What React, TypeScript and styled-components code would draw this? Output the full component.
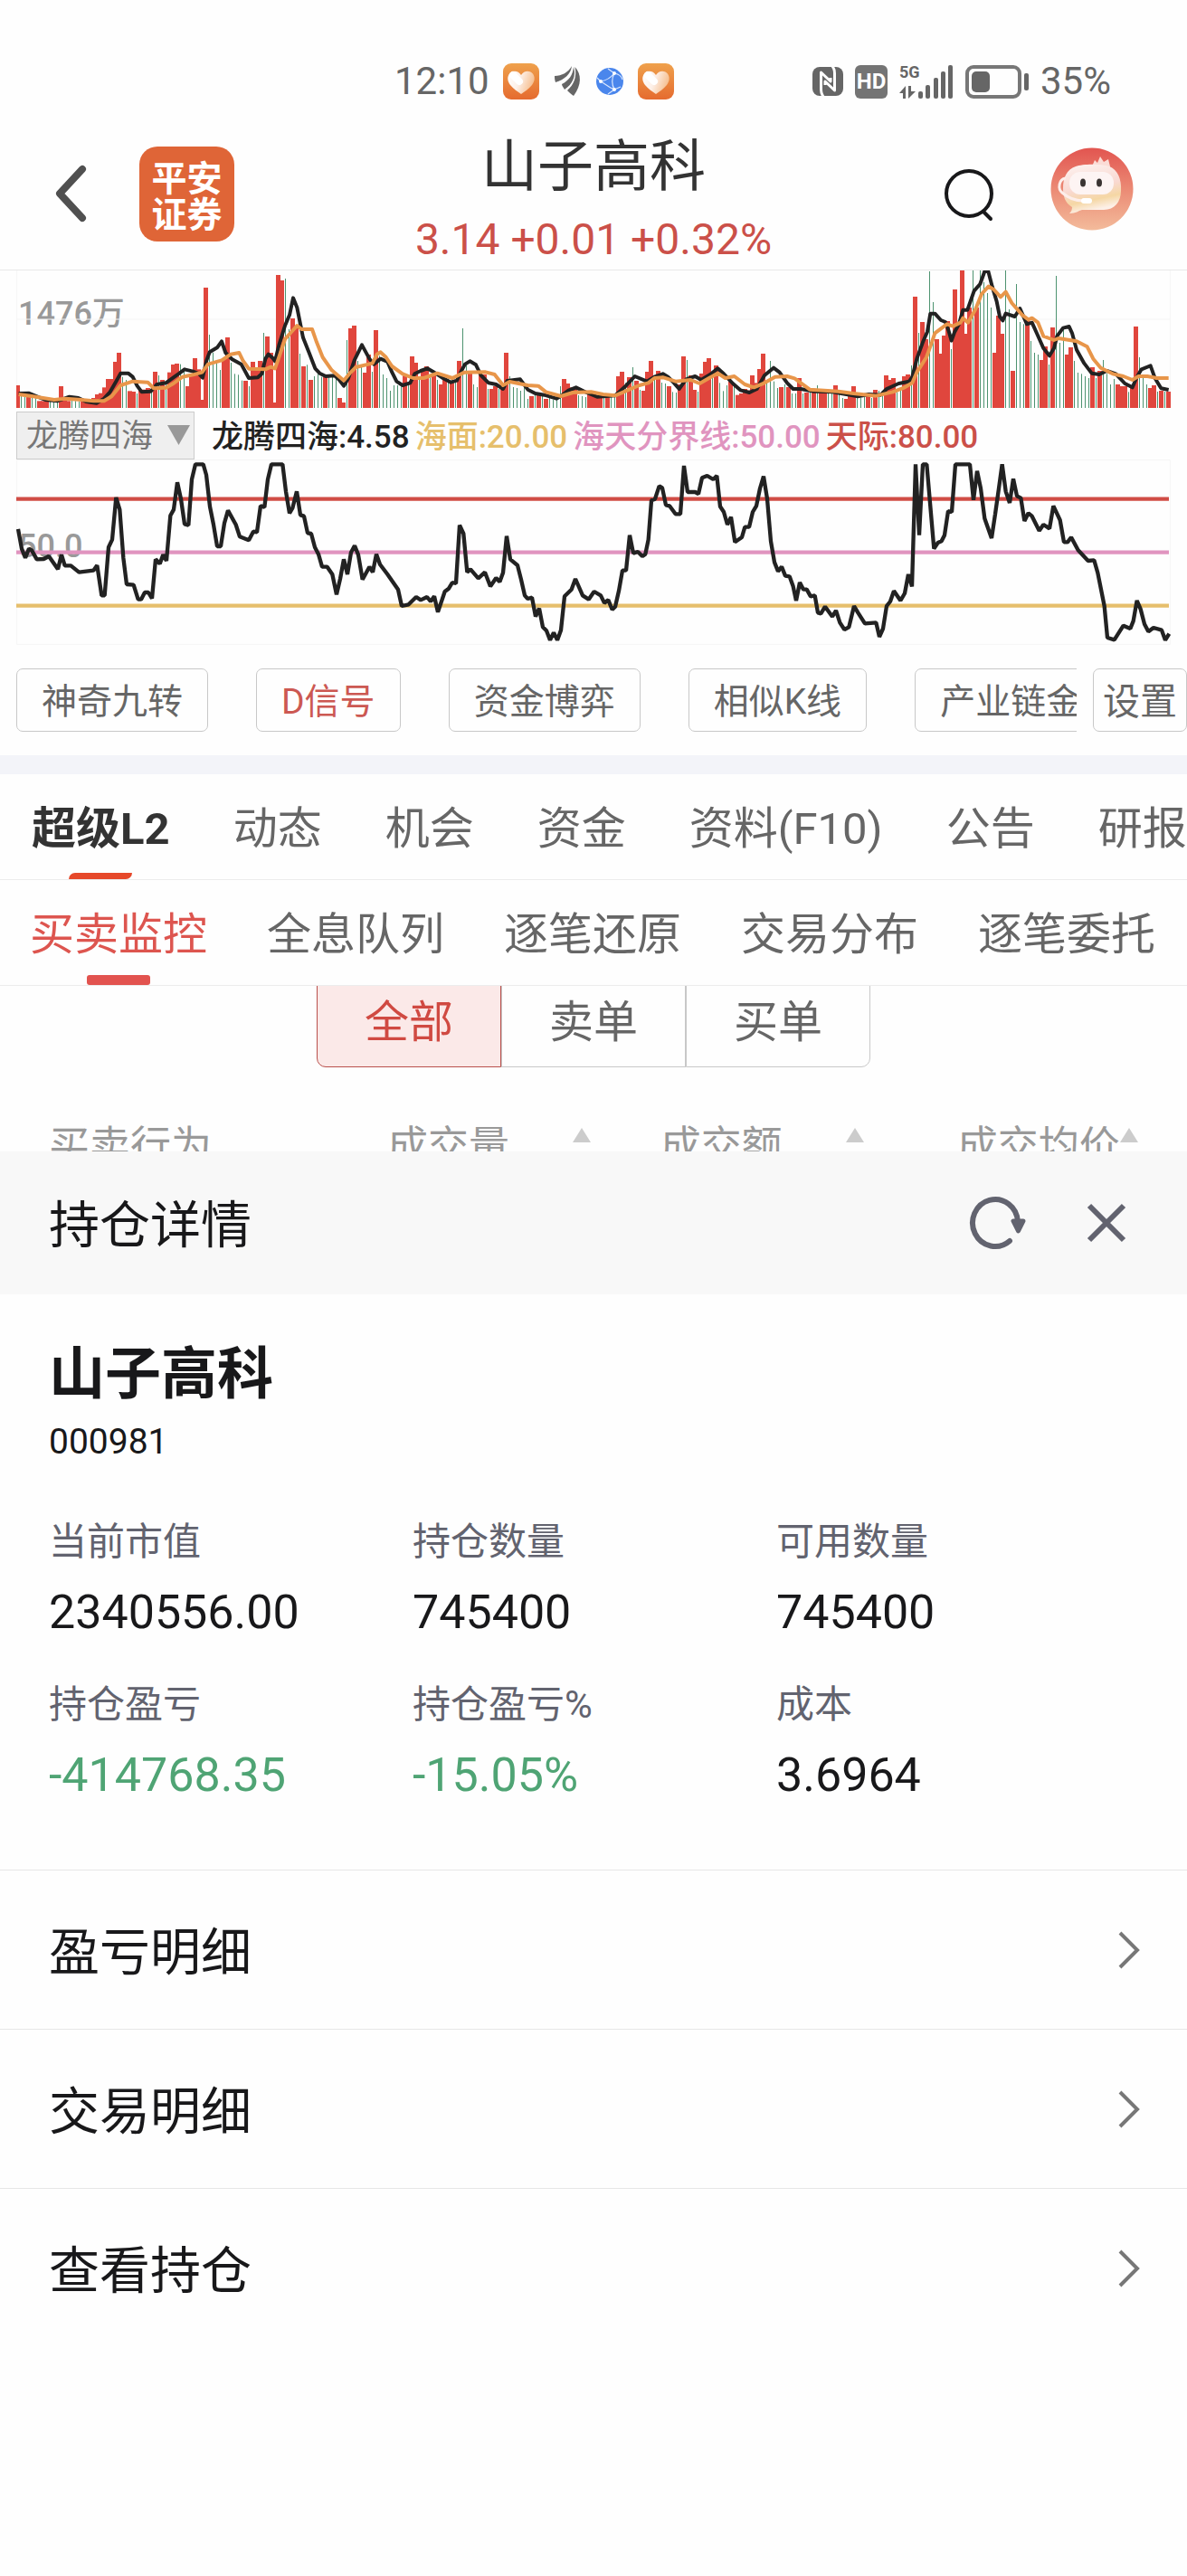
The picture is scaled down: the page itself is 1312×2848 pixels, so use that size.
import React, { useState } from "react";
import styled, { createGlobalStyle } from "styled-components";

const GlobalStyle = createGlobalStyle`
  *, *::before, *::after { box-sizing: border-box; }
  body {
    margin: 0;
    background: #fefefe;
    color: #18181a;
    font-family: Roboto, "Noto Sans CJK SC", sans-serif;
  }
  button, select { font-family: inherit; margin: 0; cursor: pointer; }
  h1, h2, p, dl, dd, dt { margin: 0; font-weight: 400; }
  svg { display: block; flex: none; }
`;

/* ---------- Chart data ---------- */

const FIRST_BAR = 5;
const BASELINE = 483;

// One entry per trading day: r = rising, g = falling, followed by the bar's top.
const VOLUME = `
r408 g435 g440 r440 g440 g450 r460 r460 r460 g452 g455 g460 r411 r450 r460 g455 g460 g462 r462 r460
r458 r450 r438 r434 r415 r387 r387 r330 r300 g380 g390 r427 r429 g435 r425 r422 r417 g415 r363 g375
r390 g400 r365 r339 r336 g338 g360 r411 r375 r318 r355 r456 r84 g240 g300 g330 g357 r320 r249 g333
g370 g373 g392 r393 g411 r330 r357 r327 g234 r246 r300 r465 r42 r60 g54 g222 r186 r210 g303 r345
g340 r390 g378 g370 g380 r381 g378 g378 g378 r450 r465 g258 r219 r210 g327 g340 r366 r306 g363 r225
g310 g372 g384 g426 g408 g408 g412 r376 g400 r312 r333 g380 r360 r345 g375 r375 g390 r405 r390 g385
r400 g390 r327 g219 g340 r366 g405 g414 r372 r372 g420 r420 r411 g420 r414 r300 g378 g414 g417 g426
g414 g453 r444 g435 r432 g444 r453 g445 g456 g456 g411 r387 r402 r415 r420 g441 g444 g447 r432 r432
r445 r447 g447 r447 g447 g440 r378 r363 g400 r381 g348 r393 g423 r426 r363 r327 g385 r360 g399 g402
r411 g430 g432 r405 r312 g324 r375 r423 g429 r369 r330 r318 g370 r342 g400 g427 g408 r396 g400 r440
r435 r420 r425 r375 r400 r354 r303 g395 g327 g395 g417 r414 g405 r414 g435 g435 r384 g435 r432 g432
r430 g408 r430 r430 g435 g435 r408 g438 g450 r453 r440 r411 g447 g450 g447 r440 g450 r423 g426 g440
r375 r390 r384 g430 g425 r378 r372 g342 r114 g234 r198 r255 g30 g132 r255 r303 r243 r195 g288 r90
r210 r27 r237 r150 g27 r150 g27 g66 g102 g150 r300 r177 r237 g27 g156 r360 g72 g198 g205 r195 g261
g300 g306 r324 r279 g339 r216 g45 g267 g220 r306 r282 g327 g366 g370 g378 g384 r348 g384 r360 g324
g370 g405 g387 r405 r411 r411 g430 r414 r213 g315 g375 g405 r417 r408 g429 r426 g429 r429`
  .trim()
  .split(/\s+/)
  .map((entry, i) => ({ up: entry[0] === "r", top: Number(entry.slice(1)), x: (i + FIRST_BAR) * 12 - 2 }));

const shift = (points: string, dx: number) =>
  points
    .trim()
    .split(/\s+/)
    .map((p) => {
      const [x, y] = p.split(",").map(Number);
      return `${x + dx},${y}`;
    })
    .join(" ");

const series = (early: string, middle: string, late: string) =>
  [shift(early, 0), shift(middle, 1320), shift(late, 2610)].join(" ");

const SHORT_AVERAGE = series(
  `62,435 95,434 150,456 190,460 230,446 260,450 285,462 320,467 345,452 365,430 385,395 400,368 425,368
  440,380 455,410 470,430 500,428 520,405 550,400 575,382 595,368 612,355 640,362 660,370 672,383 685,325
  695,298 720,283 735,262 748,300 770,322 800,338 825,384 855,382 868,370 880,320 890,305 905,318 912,328
  925,275 945,210 960,175 972,118 985,150 1005,250 1025,300 1045,352 1060,368 1080,378 1110,376 1125,390
  1140,410 1155,385 1175,325 1200,274 1225,320 1240,338 1262,320 1285,330 1300,365 1315,395`,
  `15,408 40,400 55,370 75,360 97,352 115,362 150,385 175,398 195,392 210,360 222,338 238,328 258,340
  275,375 300,400 325,405 348,420 362,393 405,388 430,422 455,435 485,440 525,452 545,440 565,425 590,415
  625,432 660,446 720,442 755,410 785,378 825,395 850,380 878,370 895,380 915,400 932,420 955,388 985,378
  1005,390 1035,372 1060,352 1080,370 1110,402 1135,424 1165,432 1190,420 1215,375 1245,350 1265,365`,
  `0,400 20,420 45,420 90,428 150,430 235,445 270,438 310,440 330,420 370,402 405,395 415,380 430,320
  450,265 465,230 475,170 490,170 510,192 525,198 535,225 545,260 555,232 570,205 583,158 598,158 620,95
  640,72 655,30 667,30 680,80 695,130 705,180 715,193 725,170 755,180 772,153 795,205 812,200 830,240
  850,285 870,310 885,285 895,245 915,218 935,213 945,235 960,290 985,335 1010,368 1035,372 1060,360
  1090,370 1120,402 1145,415 1160,380 1175,355 1205,343 1220,385 1240,418 1265,423`
);

const LONG_AVERAGE = series(
  `62,438 110,445 180,456 215,452 260,455 310,460 345,460 370,445 400,408 440,395 490,398 510,418 550,416
  575,402 605,380 640,373 670,365 690,338 735,325 765,305 793,300 805,325 825,353 880,355 898,347 912,352
  925,315 945,255 985,210 1000,222 1035,222 1050,265 1070,315 1100,358 1140,392 1160,368 1180,348 1235,335
  1250,305 1262,298 1280,315 1300,345`,
  `15,370 50,384 85,384 130,368 180,384 220,365 290,364 320,372 348,408 370,396 430,408 465,410 490,430
  540,444 580,432 640,430 680,438 720,442 760,425 800,408 830,400 850,384 880,382 920,395 970,390 1000,402
  1030,385 1060,368 1085,384 1115,378 1150,405 1180,415 1215,400 1250,380`,
  `0,378 25,385 75,422 170,428 220,435 295,443 350,430 390,415 415,400 430,365 462,315 480,265 490,235
  530,205 550,212 575,200 583,185 600,200 625,155 645,105 668,80 685,90 708,115 725,98 745,135 780,175
  800,190 812,185 832,200 850,245 885,258 900,252 960,262 995,280 1015,320 1040,350 1080,370 1115,378
  1145,390 1165,378 1195,378 1225,384 1265,384`
);

const OSCILLATOR = series(
  `60,885 72,950 84,980 96,950 105,955 122,985 145,984 162,975 192,1018 204,970 215,1006 235,1006 262,1028
  310,1022 322,1005 337,1105 347,1105 360,945 372,920 385,780 397,820 409,980 420,1068 443,1070 458,1118
  468,1118 480,1095 492,1095 504,1115 516,985 530,1000 541,970 552,990 565,840 576,820 588,730 600,785
  612,868 625,872 636,720 648,670 674,670 684,705 696,810 708,870 720,942 732,942 744,865 756,823 782,870
  795,910 825,922 840,893 852,895 864,808 877,812 888,720 900,670 937,670 948,760 960,832 970,815 984,760
  996,838 1008,842 1020,898 1032,900 1044,945 1056,968 1068,1010 1085,1010 1102,1035 1116,1102 1128,1050
  1140,985 1152,1035 1164,962 1176,940 1188,970 1202,1052 1225,1010 1236,1028 1248,968 1260,1002 1285,1035
  1320,1085`,
  `12,1140 35,1135 60,1110 75,1120 96,1110 108,1125 120,1108 132,1160 155,1092 168,1082 180,1062 192,1065
  204,872 217,900 229,1028 240,1018 266,1048 288,1028 306,1075 325,1047 337,1060 348,1030 360,908 372,985
  396,1005 408,1052 420,1105 430,1116 444,1112 456,1175 468,1148 480,1210 492,1222 504,1253 516,1228
  528,1253 540,1220 552,1108 575,1085 588,1050 612,1105 632,1118 650,1092 672,1105 684,1130 697,1120
  710,1152 720,1142 732,1090 744,1022 756,1022 768,905 780,965 795,960 810,975 820,968 830,920 840,790
  852,785 866,742 876,748 888,805 900,808 920,835 936,835 948,675 960,762 985,762 996,768 1008,715
  1025,708 1045,720 1057,708 1068,810 1080,828 1092,870 1104,845 1117,928 1140,912 1150,878 1164,878
  1176,828 1188,808 1200,750 1212,710 1224,785 1236,925 1248,995 1260,1025 1272,1010 1284,1040`,
  `8,1042 20,1075 30,1122 42,1062 54,1085 65,1085 78,1108 92,1105 102,1162 112,1165 126,1142 150,1175
  162,1155 175,1195 190,1218 205,1210 222,1140 235,1162 258,1198 295,1195 306,1242 318,1215 330,1140
  342,1125 354,1090 376,1122 390,1098 402,1035 414,1075 426,670 438,905 450,670 463,670 475,810 487,950
  500,930 512,925 522,905 534,825 546,828 558,670 606,670 618,788 630,692 642,750 655,850 678,915 690,835
  702,750 713,670 725,760 738,798 750,718 762,775 775,782 787,858 800,832 812,842 836,890 850,870 870,883
  883,808 905,855 918,928 930,928 942,912 965,955 998,990 1018,988 1030,1030 1052,1140 1062,1245 1085,1252
  1115,1205 1138,1215 1148,1190 1160,1122 1172,1150 1185,1200 1198,1225 1215,1212 1242,1220 1254,1253
  1267,1232`
);

/* ---------- Status bar ---------- */

const StatusBar = styled.div`
  display: flex;
  justify-content: space-between;
  align-items: center;
  height: 130px;
  padding: 50px 84px 0 436px;
  color: #666;
  font-size: 42px;
  line-height: 48px;
`;

const StatusGroup = styled.div<{ $gap: number }>`
  display: flex;
  align-items: center;
  gap: ${(p) => p.$gap}px;
`;

const HeartIcon = ({ id }: { id: string }) => (
  <svg width="40" height="40" viewBox="0 0 40 40" aria-hidden="true">
    <defs>
      <linearGradient id={`${id}-bg`} x1="0" y1="0" x2="0" y2="1">
        <stop offset="0" stopColor="#efa14c" />
        <stop offset="1" stopColor="#e56b2f" />
      </linearGradient>
      <linearGradient id={`${id}-fg`} x1="0" y1="0" x2="1" y2="0.3">
        <stop offset="0" stopColor="#fff" />
        <stop offset="0.5" stopColor="#fdf0e8" />
        <stop offset="1" stopColor="#f6c193" />
      </linearGradient>
    </defs>
    <rect width="40" height="40" rx="9" fill={`url(#${id}-bg)`} />
    <path
      d="M20 13C17 8 11 7.500 7.500 11C4 15 5 20 8 24C11 28 16 31 20 34C24 31 29 28 32 24C35 20 36 15 32.500 11C29 7.500 23 8 20 13Z"
      fill={`url(#${id}-fg)`}
    />
    <path d="M11 13L18 20" stroke="#fff" strokeWidth="8" strokeLinecap="round" />
  </svg>
);

const FeatherIcon = () => (
  <svg width="32" height="34" viewBox="-2 0 32 34" fill="#666" aria-hidden="true">
    <path d="M0 11C8 11 15 7 19 0C18 9 11 15 1 18C0 15 0 13 0 11Z" />
    <path d="M8 20C16 16 20 10 21 1C24 11 20 20 11 26C10 24 8 22 8 20Z" />
    <path d="M14 27C21 21 25 12 22.500 1C30 9 30 21 21 33C18 31 16 29 14 27Z" />
  </svg>
);

const GlobeIcon = () => (
  <svg width="32" height="32" viewBox="0 0 32 32" aria-hidden="true">
    <circle cx="16" cy="16" r="15" fill="#4a86ec" />
    <g fill="none" stroke="#dbe8ff" strokeWidth="1.200">
      <path d="M6 16C12 15 17 12 21 7M6 16C11 19 16 23 21 25M21 7C18 13 18 19 21 25M21 7L14 2M21 25L14 30M6 16L2 12M21 7C26 8 29 10 30 14M21 25L28 22" />
    </g>
    <g fill="#fff">
      <circle cx="6" cy="16" r="2" />
      <circle cx="21" cy="7" r="2" />
      <circle cx="21" cy="25" r="2" />
    </g>
  </svg>
);

const NfcIcon = () => (
  <svg width="34" height="34" viewBox="0 0 34 34" aria-hidden="true">
    <rect x="0" y="1" width="34" height="32" rx="8" fill="#666" />
    <g fill="none" stroke="#fefefe" strokeWidth="3" strokeLinejoin="round">
      <path d="M13 35C10 32 9.500 30 9.500 26V7L20 17V13" />
      <path d="M21 -1C24 2 24.500 4 24.500 8V27L14 17V21" />
    </g>
  </svg>
);

const HdBadge = styled.span`
  width: 36px;
  height: 37px;
  border-radius: 6px;
  background: #747474;
  color: #fefefe;
  font-size: 24px;
  font-weight: 700;
  line-height: 37px;
  text-align: center;
`;

const Network = styled.span`
  display: flex;
  align-items: flex-end;
  height: 37px;
`;

const NetworkType = styled.span`
  display: flex;
  flex-direction: column;
  justify-content: space-between;
  width: 21px;
  height: 37px;
  font-size: 18px;
  font-weight: 700;
  line-height: 16px;
`;

const ArrowsIcon = () => (
  <svg width="18" height="14" viewBox="0 0 18 14" fill="#666" aria-hidden="true">
    <path d="M7 14H4V8H0L7 0Z" />
    <path d="M10 0H13V6H18L10 14Z" />
  </svg>
);

const SignalIcon = () => (
  <svg width="39" height="37" viewBox="0 0 39 37" fill="#666" aria-hidden="true">
    <rect x="0" y="29" width="5" height="8" rx="2" />
    <rect x="8" y="22" width="5" height="15" rx="2" />
    <rect x="17" y="14" width="5" height="23" rx="2" />
    <rect x="25" y="7" width="5" height="30" rx="2" />
    <rect x="33" y="0" width="5" height="37" rx="2" />
  </svg>
);

const BatteryIcon = () => (
  <svg width="70" height="37" viewBox="0 0 70 37" aria-hidden="true">
    <rect x="2" y="2" width="58" height="33" rx="7" fill="none" stroke="#777" strokeWidth="4" />
    <rect x="7" y="7" width="20" height="23" rx="5" fill="#666" />
    <rect x="65" y="9" width="5" height="19" rx="2" fill="#666" />
  </svg>
);

/* ---------- App header ---------- */

const Header = styled.header`
  display: grid;
  grid-template-columns: 1fr auto 1fr;
  height: 169px;
  border-bottom: 1px solid #e8e8e8;
`;

const HeaderLeft = styled.div`
  display: flex;
  align-items: center;
  gap: 56px;
  padding-left: 58px;
`;

const HeaderRight = styled.div`
  display: flex;
  align-items: center;
  justify-content: flex-end;
  gap: 60px;
  padding-right: 59px;
`;

const IconButton = styled.button`
  display: flex;
  padding: 0;
  border: 0;
  background: none;
`;

const Logo = styled.span`
  display: flex;
  flex-direction: column;
  align-items: center;
  justify-content: center;
  width: 105px;
  height: 105px;
  border-radius: 20px;
  background: #df6537;
  color: #fff;
  font-family: "Noto Sans CJK SC", sans-serif;
  font-size: 39px;
  font-weight: 700;
  line-height: 40px;
`;

const Heading = styled.div`
  display: flex;
  flex-direction: column;
  align-items: center;
  justify-content: flex-end;
`;

const StockTitle = styled.h1`
  color: #333;
  font-size: 62px;
  line-height: 94px;
`;

const Quote = styled.p`
  color: #cb5049;
  font-size: 48px;
  line-height: 66px;
`;

const BackIcon = () => (
  <svg width="40" height="64" viewBox="0 0 40 64" aria-hidden="true">
    <path d="M33 5L8 32L33 59" fill="none" stroke="#505050" strokeWidth="8" strokeLinecap="round" strokeLinejoin="round" />
  </svg>
);

const SearchIcon = () => (
  <svg width="58" height="62" viewBox="0 -2 58 62" fill="none" stroke="#18181a" strokeWidth="4" aria-hidden="true">
    <circle cx="28" cy="29" r="25" />
    <path d="M44 49L52 57" strokeLinecap="round" />
  </svg>
);

const AssistantIcon = () => (
  <svg width="92" height="102" viewBox="0 0 92 102" aria-hidden="true">
    <defs>
      <linearGradient id="assistant-bg" x1="0" y1="0" x2="0" y2="1">
        <stop offset="0" stopColor="#e25550" />
        <stop offset="0.55" stopColor="#ec8f78" />
        <stop offset="1" stopColor="#f3bb9b" />
      </linearGradient>
      <linearGradient id="assistant-body" x1="0" y1="0" x2="0.25" y2="1">
        <stop offset="0" stopColor="#fdf3f1" />
        <stop offset="0.55" stopColor="#f9d9d1" />
        <stop offset="0.8" stopColor="#f5d7a4" />
        <stop offset="1" stopColor="#fdf0e8" />
      </linearGradient>
    </defs>
    <circle cx="46" cy="46" r="45.500" fill="url(#assistant-bg)" />
    <path d="M46 21L49 14L52 17L55 10L59 16L64 13L67 25Z" fill="#fbdcd6" />
    <path
      d="M28 21C36 18 56 18 65 21C74 24 79 35 78 48C78 60 71 69 59 69L35 69C31 70 28 73 21 73C23 71 24 69 24 66C16 61 14 54 14 45C14 34 18 24 28 21Z"
      fill="url(#assistant-body)"
    />
    <path d="M17 34C9 35 8 46 13 50C20 56 28 59 36 59" fill="none" stroke="#fdeeea" strokeWidth="3" />
    <rect x="21" y="27" width="49" height="25" rx="12" fill="#fdf4f3" />
    <ellipse cx="36" cy="39" rx="3" ry="4.500" fill="#3a3432" />
    <ellipse cx="54" cy="39" rx="3" ry="4.500" fill="#3a3432" />
    <rect x="34" y="56" width="12" height="6" rx="3" fill="#fff" />
  </svg>
);

/* ---------- Charts ---------- */

const Charts = styled.section`
  display: flex;
  flex-direction: column;
  padding: 0 18px;
`;

const ChartBox = styled.div<{ $height: number }>`
  position: relative;
  height: ${(p) => p.$height}px;
`;

const ChartSvg = styled.svg`
  position: relative;
  width: 100%;
  height: 100%;
`;

const AxisLabel = styled.span<{ $top: number }>`
  position: absolute;
  top: ${(p) => p.$top}px;
  left: 2px;
  color: #999;
  font-size: 36px;
  font-weight: 500;
  line-height: 40px;
`;

const IndicatorBar = styled.div`
  display: flex;
  align-items: center;
  gap: 19px;
  height: 57px;
  padding-top: 4px;
`;

const SelectWrap = styled.label`
  position: relative;
  display: flex;
  width: 197px;
  height: 53px;
`;

const IndicatorSelect = styled.select`
  width: 100%;
  padding: 3px 40px 0 10px;
  border: 1px solid #ccc;
  border-radius: 0;
  background: #efefef;
  color: #777;
  font-size: 35px;
  line-height: 48px;
  appearance: none;
`;

const SelectArrow = styled.svg`
  position: absolute;
  top: 15px;
  right: 5px;
  pointer-events: none;
`;

const Readings = styled.div`
  display: flex;
  gap: 6px;
  padding-top: 4px;
  font-size: 35px;
  font-weight: 500;
  line-height: 48px;
  white-space: nowrap;
`;

const Reading = styled.span<{ $color: string }>`
  color: ${(p) => p.$color};
`;

const VolumeChart = () => (
  <ChartBox $height={152}>
    <AxisLabel $top={28}>1476万</AxisLabel>
    <ChartSvg viewBox="54 27 3828 456" preserveAspectRatio="none" role="img" aria-label="成交量">
      <path d="M56 27V483M3880 27V483M56 189H3880" stroke="#f5f5f5" strokeWidth="3" />
      {VOLUME.map((bar) => (
        <rect
          key={bar.x}
          x={bar.up ? bar.x - 7 : bar.x - 1}
          y={bar.top}
          width={bar.up ? 15 : 3}
          height={BASELINE - bar.top}
          fill={bar.up ? "#e0463d" : "#4d9370"}
        />
      ))}
      <polyline points={SHORT_AVERAGE} fill="none" stroke="#222" strokeWidth="12" strokeLinejoin="round" />
      <polyline points={LONG_AVERAGE} fill="none" stroke="#e8964a" strokeWidth="12" strokeLinejoin="round" />
    </ChartSvg>
  </ChartBox>
);

const OscillatorChart = () => (
  <ChartBox $height={205}>
    <AxisLabel $top={76}>50.0</AxisLabel>
    <ChartSvg viewBox="54 654 3828 615" preserveAspectRatio="none" role="img" aria-label="龙腾四海">
      <path d="M56 656H3880V1267H56Z" fill="none" stroke="#f5f5f5" strokeWidth="3" />
      <g strokeWidth="13">
        <path d="M54 785H3876" stroke="#d04c45" />
        <path d="M54 962H3876" stroke="#e094bf" />
        <path d="M54 1139H3876" stroke="#e6bf6c" />
      </g>
      <polyline points={OSCILLATOR} fill="none" stroke="#222" strokeWidth="13" strokeLinejoin="bevel" />
    </ChartSvg>
  </ChartBox>
);

/* ---------- Shortcuts and tabs ---------- */

const Shortcuts = styled.div`
  display: flex;
  gap: 18px;
  padding: 26px 0 26px 18px;
  border-bottom: 21px solid #f3f4f9;
`;

const ShortcutTrack = styled.div`
  display: flex;
  flex: 1;
  gap: 53px;
  min-width: 0;
  overflow: hidden;
`;

const Shortcut = styled.button<{ $active?: boolean; $compact?: boolean }>`
  flex: none;
  height: 70px;
  padding: 4px ${(p) => (p.$compact ? 10 : 27)}px 0;
  border: 1px solid #c8c8c8;
  border-radius: 7px;
  background: #fefefe;
  color: ${(p) => (p.$active ? "#cc5852" : "#666")};
  font-size: ${(p) => (p.$compact ? 41 : 39)}px;
  line-height: 64px;
  white-space: nowrap;
`;

const TabBar = styled.nav<{ $gap: number; $inset: number }>`
  display: flex;
  gap: ${(p) => p.$gap}px;
  height: 117px;
  padding-left: ${(p) => p.$inset}px;
  border-bottom: 1px solid #ececec;
  overflow: hidden;
`;

const Tab = styled.button<{ $bold?: boolean; $color: string }>`
  display: flex;
  flex: none;
  flex-direction: column;
  align-items: center;
  justify-content: space-between;
  padding: 6px 0 0;
  border: 0;
  background: none;
  color: ${(p) => p.$color};
  font-size: 49px;
  font-weight: ${(p) => (p.$bold ? 700 : 400)};
  line-height: 110px;
  white-space: nowrap;
`;

const Marker = styled.span<{ $slanted?: boolean }>`
  width: 70px;
  height: ${(p) => (p.$slanted ? 7 : 11)}px;
  margin-top: ${(p) => (p.$slanted ? -7 : -11)}px;
  border-radius: ${(p) => (p.$slanted ? "7px 0" : "3px")};
  background: ${(p) => (p.$slanted ? "#e6482a" : "#e2534f")};
`;

/* ---------- Order monitor behind the sheet ---------- */

const Monitor = styled.section`
  height: 183px;
  overflow: hidden;
`;

const Segments = styled.div`
  display: flex;
  justify-content: center;
  margin-top: -10px;
`;

const Segment = styled.button<{ $active: boolean }>`
  width: 204px;
  height: 100px;
  padding: 2px 0 0;
  border: 1px solid ${(p) => (p.$active ? "#b9504c" : "#c8c8c8")};
  background: ${(p) => (p.$active ? "#fbe9e8" : "#fefefe")};
  color: ${(p) => (p.$active ? "#d04a42" : "#666")};
  font-size: 49px;
  line-height: 96px;
  &:first-child { border-radius: 10px 0 0 10px; }
  &:last-child { border-radius: 0 10px 10px 0; }
`;

const OrdersTable = styled.table`
  width: 100%;
  margin-top: 55px;
  border-collapse: collapse;
  table-layout: fixed;
`;

const OrdersHead = styled.th<{ $width?: number }>`
  width: ${(p) => (p.$width ? `${p.$width}%` : "auto")};
  padding: 0 0 0 54px;
  color: #999;
  font-size: 45px;
  font-weight: 400;
  line-height: 66px;
  text-align: left;
  white-space: nowrap;
`;

const SortLabel = styled.span<{ $tight?: boolean }>`
  display: flex;
  align-items: center;
  gap: ${(p) => (p.$tight ? 0 : 70)}px;
`;

const SortIcon = () => (
  <svg width="20" height="42" viewBox="0 0 20 42" fill="#ccc" aria-hidden="true">
    <path d="M10 0L20 16H0Z" />
    <path d="M0 26H20L10 42Z" />
  </svg>
);

/* ---------- Holding sheet ---------- */

const SheetHeader = styled.header`
  display: flex;
  align-items: center;
  justify-content: space-between;
  height: 158px;
  padding: 0 67px 0 54px;
  background: #f8f8f8;
`;

const SheetTitle = styled.h2`
  padding-top: 6px;
  font-size: 56px;
  line-height: 80px;
`;

const SheetActions = styled.div`
  display: flex;
  align-items: center;
  gap: 66px;
`;

const RefreshIcon = () => (
  <svg width="64" height="60" viewBox="0 0 64 60" aria-hidden="true">
    <path d="M45 50A25 26 0 1 1 54 29" fill="none" stroke="#62636f" strokeWidth="6" strokeLinecap="round" />
    <path d="M49 28H60L54.500 39Z" fill="#62636f" stroke="#62636f" strokeWidth="5" strokeLinejoin="round" />
  </svg>
);

const CloseIcon = () => (
  <svg width="44" height="44" viewBox="0 0 44 44" aria-hidden="true">
    <path d="M3 3L41 41M41 3L3 41" stroke="#62636f" strokeWidth="6" />
  </svg>
);

const Summary = styled.section`
  padding: 44px 52px 56px 54px;
`;

const HoldingName = styled.h2`
  font-size: 62px;
  font-weight: 700;
  line-height: 90px;
`;

const HoldingCode = styled.p`
  font-size: 39px;
  line-height: 58px;
`;

const Facts = styled.dl`
  display: grid;
  grid-template-columns: repeat(3, 1fr);
  row-gap: 24px;
  margin-top: 52px;
`;

const FactName = styled.dt`
  color: #62636f;
  font-size: 42px;
  line-height: 60px;
`;

const FactValue = styled.dd<{ $loss?: boolean }>`
  color: ${(p) => (p.$loss ? "#4fa474" : "#18181a")};
  font-size: 52px;
  line-height: 96px;
`;

const MenuLink = styled.a`
  display: flex;
  align-items: center;
  justify-content: space-between;
  height: 176px;
  padding: 0 51px 0 54px;
  border-top: 1px solid #e6e6e6;
  color: #18181a;
  font-size: 56px;
  line-height: 80px;
  text-decoration: none;
`;

const MenuText = styled.span`
  padding-top: 6px;
`;

const ChevronIcon = () => (
  <svg width="28" height="44" viewBox="0 0 28 44" aria-hidden="true">
    <path d="M5 3L24 22L5 41" fill="none" stroke="#777" strokeWidth="4" />
  </svg>
);

/* ---------- Page ---------- */

const READINGS = [
  { text: "龙腾四海:4.58", color: "#222" },
  { text: "海面:20.00", color: "#e6bf6c" },
  { text: "海天分界线:50.00", color: "#e094bf" },
  { text: "天际:80.00", color: "#cb5049" },
];
const SHORTCUTS = ["神奇九转", "D信号", "资金博弈", "相似K线", "产业链金"];
const MAIN_TABS = ["超级L2", "动态", "机会", "资金", "资料(F10)", "公告", "研报"];
const SUB_TABS = ["买卖监控", "全息队列", "逐笔还原", "交易分布", "逐笔委托"];
const SIDES = ["全部", "卖单", "买单"];
const FACTS = [
  { name: "当前市值", value: "2340556.00" },
  { name: "持仓数量", value: "745400" },
  { name: "可用数量", value: "745400" },
  { name: "持仓盈亏", value: "-414768.35", loss: true },
  { name: "持仓盈亏%", value: "-15.05%", loss: true },
  { name: "成本", value: "3.6964" },
];
const LINKS = ["盈亏明细", "交易明细", "查看持仓"];

export default function App() {
  const [mainTab, setMainTab] = useState(MAIN_TABS[0]);
  const [subTab, setSubTab] = useState(SUB_TABS[0]);
  const [side, setSide] = useState(SIDES[0]);

  return (
    <>
      <GlobalStyle />
      <StatusBar>
        <StatusGroup $gap={15}>
          <span>12:10</span>
          <HeartIcon id="heart-a" />
          <FeatherIcon />
          <GlobeIcon />
          <HeartIcon id="heart-b" />
        </StatusGroup>
        <StatusGroup $gap={13}>
          <NfcIcon />
          <HdBadge>HD</HdBadge>
          <Network>
            <NetworkType>
              5G
              <ArrowsIcon />
            </NetworkType>
            <SignalIcon />
          </Network>
          <BatteryIcon />
          <span>35%</span>
        </StatusGroup>
      </StatusBar>

      <Header>
        <HeaderLeft>
          <IconButton aria-label="返回">
            <BackIcon />
          </IconButton>
          <Logo>
            <span>平安</span>
            <span>证券</span>
          </Logo>
        </HeaderLeft>
        <Heading>
          <StockTitle>山子高科</StockTitle>
          <Quote>3.14 +0.01 +0.32%</Quote>
        </Heading>
        <HeaderRight>
          <IconButton aria-label="搜索">
            <SearchIcon />
          </IconButton>
          <IconButton aria-label="智能客服">
            <AssistantIcon />
          </IconButton>
        </HeaderRight>
      </Header>

      <Charts>
        <VolumeChart />
        <IndicatorBar>
          <SelectWrap>
            <IndicatorSelect aria-label="指标">
              <option>龙腾四海</option>
            </IndicatorSelect>
            <SelectArrow width="25" height="22" viewBox="0 0 25 22" aria-hidden="true">
              <path d="M0 0H25L12.500 22Z" fill="#999" />
            </SelectArrow>
          </SelectWrap>
          <Readings>
            {READINGS.map((r) => (
              <Reading key={r.text} $color={r.color}>
                {r.text}
              </Reading>
            ))}
          </Readings>
        </IndicatorBar>
        <OscillatorChart />
      </Charts>

      <Shortcuts>
        <ShortcutTrack>
          {SHORTCUTS.map((s) => (
            <Shortcut key={s} $active={s === "D信号"}>
              {s}
            </Shortcut>
          ))}
        </ShortcutTrack>
        <Shortcut $compact>设置</Shortcut>
      </Shortcuts>

      <TabBar $gap={70} $inset={35}>
        {MAIN_TABS.map((t) => (
          <Tab key={t} $bold={t === mainTab} $color={t === mainTab ? "#333" : "#666"} onClick={() => setMainTab(t)}>
            {t}
            {t === mainTab && <Marker $slanted />}
          </Tab>
        ))}
      </TabBar>
      <TabBar $gap={66} $inset={33}>
        {SUB_TABS.map((t) => (
          <Tab key={t} $color={t === subTab ? "#dd554f" : "#666"} onClick={() => setSubTab(t)}>
            {t}
            {t === subTab && <Marker />}
          </Tab>
        ))}
      </TabBar>

      <Monitor>
        <Segments>
          {SIDES.map((s) => (
            <Segment key={s} $active={s === side} onClick={() => setSide(s)}>
              {s}
            </Segment>
          ))}
        </Segments>
        <OrdersTable>
          <thead>
            <tr>
              <OrdersHead $width={28.5}>买卖行为</OrdersHead>
              <OrdersHead $width={23}>
                <SortLabel>
                  成交量
                  <SortIcon />
                </SortLabel>
              </OrdersHead>
              <OrdersHead $width={25}>
                <SortLabel>
                  成交额
                  <SortIcon />
                </SortLabel>
              </OrdersHead>
              <OrdersHead>
                <SortLabel $tight>
                  成交均价
                  <SortIcon />
                </SortLabel>
              </OrdersHead>
            </tr>
          </thead>
        </OrdersTable>
      </Monitor>

      <section aria-label="持仓详情">
        <SheetHeader>
          <SheetTitle>持仓详情</SheetTitle>
          <SheetActions>
            <IconButton aria-label="刷新">
              <RefreshIcon />
            </IconButton>
            <IconButton aria-label="关闭">
              <CloseIcon />
            </IconButton>
          </SheetActions>
        </SheetHeader>
        <Summary>
          <HoldingName>山子高科</HoldingName>
          <HoldingCode>000981</HoldingCode>
          <Facts>
            {FACTS.map((f) => (
              <div key={f.name}>
                <FactName>{f.name}</FactName>
                <FactValue $loss={f.loss}>{f.value}</FactValue>
              </div>
            ))}
          </Facts>
        </Summary>
        <nav>
          {LINKS.map((l) => (
            <MenuLink key={l} href="#">
              <MenuText>{l}</MenuText>
              <ChevronIcon />
            </MenuLink>
          ))}
        </nav>
      </section>
    </>
  );
}
